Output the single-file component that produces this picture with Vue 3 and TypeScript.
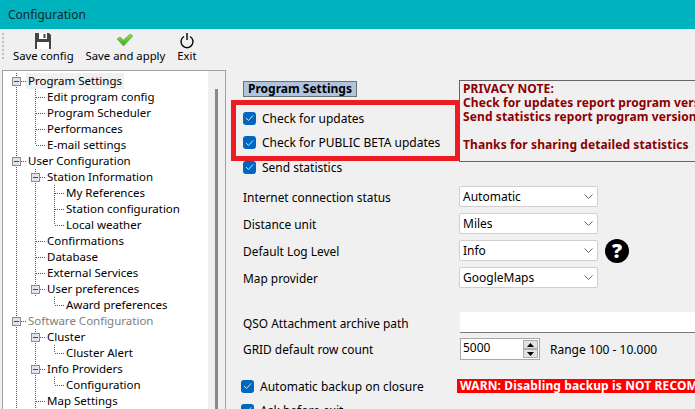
<script setup lang="ts">
type Cell = 'v' | 't' | 'l' | 'boxv' | 'none'
interface Row { label: string; cells: Cell[]; selected?: boolean; muted?: boolean }

const rows: Row[] = [
  { label: 'Program Settings', cells: ['boxv'], selected: true },
  { label: 'Edit program config', cells: ['v', 't'] },
  { label: 'Program Scheduler', cells: ['v', 't'] },
  { label: 'Performances', cells: ['v', 't'] },
  { label: 'E-mail settings', cells: ['v', 'l'] },
  { label: 'User Configuration', cells: ['boxv'] },
  { label: 'Station Information', cells: ['v', 'boxv'] },
  { label: 'My References', cells: ['v', 'v', 't'] },
  { label: 'Station configuration', cells: ['v', 'v', 't'] },
  { label: 'Local weather', cells: ['v', 'v', 'l'] },
  { label: 'Confirmations', cells: ['v', 't'] },
  { label: 'Database', cells: ['v', 't'] },
  { label: 'External Services', cells: ['v', 't'] },
  { label: 'User preferences', cells: ['v', 'boxv'] },
  { label: 'Award preferences', cells: ['v', 'none', 'l'] },
  { label: 'Software Configuration', cells: ['boxv'], muted: true },
  { label: 'Cluster', cells: ['v', 'boxv'] },
  { label: 'Cluster Alert', cells: ['v', 'v', 'l'] },
  { label: 'Info Providers', cells: ['v', 'boxv'] },
  { label: 'Configuration', cells: ['v', 'v', 'l'] },
  { label: 'Map Settings', cells: ['v', 't'] },
]

const selects = [
  { label: 'Internet connection status', value: 'Automatic' },
  { label: 'Distance unit', value: 'Miles' },
  { label: 'Default Log Level', value: 'Info', help: true },
  { label: 'Map provider', value: 'GoogleMaps' },
]

const topChecks = ['Check for updates', 'Check for PUBLIC BETA updates', 'Send statistics']
</script>

<template>
  <div class="window">
    <header class="titlebar">Configuration</header>
    <div class="toolbar">
      <div class="grip"></div>
      <div class="tool">
        <svg width="16" height="16" viewBox="0 0 16 16">
          <path d="M0 0h14l2 2v14H0z" fill="#444" />
          <path d="M4 0h8v6H4z" fill="#fff" />
          <path d="M8.500 1h2v4h-2z" fill="#444" />
          <path d="M2 9h12v7H2z" fill="#fff" />
        </svg>
        <span>Save config</span>
      </div>
      <div class="tool">
        <svg width="16" height="16" viewBox="0 0 16 16">
          <defs>
            <linearGradient id="tick" x1="0" y1="0" x2="0" y2="1">
              <stop offset="0" stop-color="#8fdc5a" />
              <stop offset="1" stop-color="#3fa71e" />
            </linearGradient>
          </defs>
          <path d="M0 6l3-2 3.500 3L13 1l3 2-9.500 10z" fill="url(#tick)" stroke="#46a524" stroke-width=".5" />
        </svg>
        <span>Save and apply</span>
      </div>
      <div class="tool">
        <svg width="16" height="16" viewBox="0 0 16 16">
          <path d="M5 3.500a6 6 0 1 0 6 0" fill="none" stroke="#000" stroke-width="1.400" />
          <path d="M8 0v7" fill="none" stroke="#000" stroke-width="1.400" />
        </svg>
        <span>Exit</span>
      </div>
    </div>

    <div class="body">
      <aside class="tree">
        <div class="tree-rows">
          <div v-for="row in rows" :key="row.label" class="row">
            <span v-for="(cell, i) in row.cells" :key="i" class="cell">
              <svg width="19" height="16" viewBox="0 0 19 16">
                <path v-if="cell === 'v' || cell === 't' || cell === 'boxv'" d="M9.500 0v16" class="dots" />
                <path v-if="cell === 'l'" d="M9.500 0v8" class="dots" />
                <path v-if="cell === 't' || cell === 'l'" d="M10 8.500h9" class="dots" />
                <template v-if="cell === 'boxv'">
                  <path d="M14 8.500h5" class="dots" />
                  <rect x="5.500" y="4.500" width="8" height="8" fill="#dfe3ec" stroke="#8c8c96" />
                  <path d="M7 8.500h5" stroke="#2a4e9c" fill="none" />
                </template>
              </svg>
            </span>
            <span class="label" :class="{ selected: row.selected, muted: row.muted }">{{ row.label }}</span>
          </div>
        </div>
        <div class="scroll"><div class="thumb"></div></div>
      </aside>

      <main class="content">
        <div class="top">
          <div class="left">
            <div class="heading">Program Settings</div>
            <div class="checks">
              <label v-for="c in topChecks" :key="c" class="check"><span class="box"><svg width="9" height="8" viewBox="0 0 9 8"><path d="M1 4l2.500 2.500L8 1.500" fill="none" stroke="#cfe2f5" /></svg></span>{{ c }}</label>
            </div>
          </div>
          <div class="note">
            <div>PRIVACY NOTE:</div>
            <div>Check for updates report program version</div>
            <div>Send statistics report program version</div>
            <div>&nbsp;</div>
            <div>Thanks for sharing detailed statistics</div>
          </div>
        </div>

        <div class="selects">
          <div v-for="s in selects" :key="s.label" class="field">
            <span class="field-label">{{ s.label }}</span>
            <div class="select">
              <span>{{ s.value }}</span>
              <svg width="9" height="5" viewBox="0 0 9 5"><path d="M.5.5l4 4 4-4" fill="none" stroke="#666" /></svg>
            </div>
            <svg v-if="s.help" class="help" width="24" height="24" viewBox="0 0 24 24">
              <circle cx="12" cy="12" r="12" fill="#000" />
              <text x="12" y="19" text-anchor="middle" class="qm">?</text>
            </svg>
          </div>
        </div>

        <div class="field path-field">
          <span class="field-label">QSO Attachment archive path</span>
          <div class="input"></div>
        </div>
        <div class="field grid-field">
          <span class="field-label">GRID default row count</span>
          <div class="spin">
            <span class="spin-value">5000</span>
            <div class="spin-btns">
              <span class="spin-btn"><svg width="7" height="4" viewBox="0 0 7 4"><path d="M3.500 0l3.500 4H0z" fill="#000" /></svg></span>
              <span class="spin-btn"><svg width="7" height="4" viewBox="0 0 7 4"><path d="M0 0h7L3.500 4z" fill="#000" /></svg></span>
            </div>
          </div>
          <span class="range">Range 100 - 10.000</span>
        </div>

        <div class="backup">
          <label class="check"><span class="box"><svg width="9" height="8" viewBox="0 0 9 8"><path d="M1 4l2.500 2.500L8 1.500" fill="none" stroke="#cfe2f5" /></svg></span>Automatic backup on closure</label>
          <div class="warn">WARN: Disabling backup is NOT RECOMMENDED</div>
        </div>
        <label class="check ask"><span class="box"><svg width="9" height="8" viewBox="0 0 9 8"><path d="M1 4l2.500 2.500L8 1.500" fill="none" stroke="#cfe2f5" /></svg></span>Ask before exit</label>

        <div class="highlight"></div>
      </main>
    </div>
  </div>
</template>

<style>
html, body { margin: 0; overflow: hidden; }
</style>

<style scoped>
.window {
  width: 695px;
  height: 409px;
  overflow: hidden;
  background: #f0f0f0;
  font-family: "Noto Sans", sans-serif;
  font-size: 12px;
  color: #000;
  display: flex;
  flex-direction: column;
}
.titlebar {
  height: 29px;
  flex: none;
  background: #00b4bf;
  padding-left: 8px;
  line-height: 29px;
  color: #12262a;
}
.toolbar {
  height: 41px;
  flex: none;
  display: flex;
  gap: 12px;
  padding-left: 2px;
  align-items: flex-start;
  font-size: 11.3px;
}
.grip {
  width: 2px;
  height: 27px;
  margin-top: 4px;
  margin-right: -3px;
  background: repeating-linear-gradient(#c0c0c0 0 2px, transparent 2px 4px);
}
.tool {
  display: flex;
  flex-direction: column;
  align-items: center;
  padding-top: 4px;
  line-height: 14px;
}
.body { flex: 1; display: flex; min-height: 0; }
.tree {
  width: 224px;
  margin-left: 2px;
  border: 1px solid #a0a0a0;
  border-bottom: 0;
  background: #fff;
  flex: none;
  display: flex;
  overflow: hidden;
  box-sizing: border-box;
}
.tree-rows { flex: 1; padding: 2px 0 0 4px; }
.row { height: 16px; display: flex; align-items: center; white-space: nowrap; }
.cell { width: 19px; height: 16px; flex: none; }
.cell svg { display: block; }
.dots { fill: none; stroke: #555; stroke-dasharray: 1 1; }
.label { padding: 0 2px; line-height: 16px; color: #000; font-size: 11.5px; }
.label.selected { background: #f0f0f0; }
.label.muted { color: #808080; }
.scroll { width: 17px; background: #f0f0f0; flex: none; position: relative; }
.thumb { position: absolute; left: 7px; top: 18px; bottom: 0; width: 3px; background: #8a8a8a; }

.content { flex: 1; position: relative; padding: 10px 0 0 17px; min-width: 0; }
.top { display: flex; height: 106px; }
.left { width: 216px; flex: none; }
.heading {
  display: inline-block;
  background: #b0c4de;
  border: 1px solid #707070;
  font-weight: 700;
  padding: 0 4px;
  line-height: 14px;
}
.checks { display: flex; flex-direction: column; gap: 8.5px; margin-top: 13px; }
.check { display: flex; align-items: center; gap: 6px; height: 16px; white-space: nowrap; }
.box {
  width: 13px;
  height: 13px;
  border-radius: 3px;
  background: #0067c0;
  display: flex;
  align-items: center;
  justify-content: center;
  flex: none;
}
.note {
  border: 1px solid #666;
  border-right: 0;
  width: 300px;
  height: 82px;
  padding: 1px 3px;
  color: #8b0000;
  font-weight: 700;
  line-height: 14px;
  letter-spacing: .1px;
  white-space: nowrap;
  overflow: hidden;
  flex: none;
  box-sizing: border-box;
}
.selects { display: flex; flex-direction: column; gap: 6px; }
.field { display: flex; align-items: center; }
.field-label { width: 216px; flex: none; white-space: nowrap; font-size: 11.9px; }
.select {
  width: 139px;
  height: 21px;
  box-sizing: border-box;
  background: #fff;
  border: 1px solid #d0d0d0;
  border-radius: 2px;
  display: flex;
  align-items: center;
  justify-content: space-between;
  padding: 0 4px 0 3px;
}
.help { margin: -2px 0 -2px 7px; }
.qm { fill: #fff; font: 900 20px "Noto Sans", sans-serif; }
.path-field { margin-top: 24px; }
.input {
  flex: 1;
  height: 21px;
  margin-left: 1px;
  box-sizing: border-box;
  background: #fff;
  border-bottom: 1px solid #7a7a7a;
}
.grid-field { margin-top: 5px; }
.spin {
  width: 80px;
  height: 22px;
  box-sizing: border-box;
  border: 1px solid #a8a8a8;
  background: #fff;
  display: flex;
  justify-content: space-between;
  margin-left: 1px;
}
.spin-value { padding: 0 2px; line-height: 17px; }
.spin-btns { display: flex; flex-direction: column; width: 15px; padding: 1px; }
.spin-btn {
  flex: 1;
  background: #e1e1e1;
  border: 1px solid #adadad;
  display: flex;
  align-items: center;
  justify-content: center;
}
.range { margin-left: 10px; white-space: nowrap; }
.backup { display: flex; align-items: center; margin-top: 18px; margin-left: -2px; }
.backup .check { width: 216px; flex: none; }
.warn {
  background: #ff0000;
  color: #fff;
  font-weight: 700;
  padding: 0 3px;
  line-height: 14px;
  letter-spacing: .12px;
  white-space: nowrap;
}
.ask { margin-top: 8px; margin-left: -2px; }
.highlight {
  position: absolute;
  left: 5px;
  top: 30px;
  width: 229px;
  height: 61px;
  border: 5px solid #ed1c24;
  box-sizing: border-box;
  pointer-events: none;
}
</style>
